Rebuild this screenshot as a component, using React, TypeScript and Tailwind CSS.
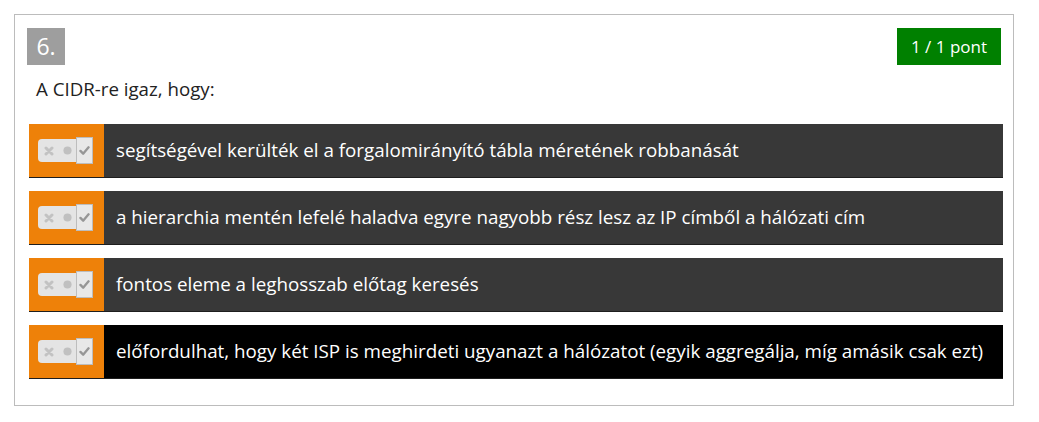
import React from "react";

const answers = [
  { text: "segítségével kerülték el a forgalomirányító tábla méretének robbanását", dark: false },
  { text: "a hierarchia mentén lefelé haladva egyre nagyobb rész lesz az IP címből a hálózati cím", dark: false },
  { text: "fontos eleme a leghosszab előtag keresés", dark: false },
  { text: "előfordulhat, hogy két ISP is meghirdeti ugyanazt a hálózatot (egyik aggregálja, míg amásik csak ezt)", dark: true },
];

function Toggle() {
  return (
    <div className="flex items-center">
      <div className="flex h-[23px] w-[38px] items-center justify-around rounded-l-[4px] bg-[#e4e4e4] pl-[1px]">
        <svg width="10" height="10" viewBox="0 0 10 10">
          <path d="M2 2 L8 8 M8 2 L2 8" stroke="#c2c2c2" strokeWidth="3" strokeLinecap="round" />
        </svg>
        <svg width="9" height="9" viewBox="0 0 10 10">
          <circle cx="5" cy="5" r="4.5" fill="#c0c0c0" />
        </svg>
      </div>
      <div className="flex h-[27px] w-[17px] items-center justify-center border border-[#bdbdbd] bg-[#e8e8e8]">
        <svg width="11" height="9" viewBox="0 0 12 10">
          <path d="M1.5 5.5 L4.5 8.5 L10.5 1.5" stroke="#969696" strokeWidth="2.6" fill="none" strokeLinecap="round" strokeLinejoin="round" />
        </svg>
      </div>
    </div>
  );
}

export default function App() {
  return (
    <div className="bg-white p-[14px]" style={{ fontFamily: '"Open Sans", "Noto Sans", sans-serif' }}>
      <div className="w-[1000px] border border-[#bcbcbc] px-[12px] pb-[26px] pt-[13px]">
        <div className="flex items-start justify-between">
          <div className="flex h-[37px] w-[38px] items-center justify-center bg-[#9e9e9e] text-[23px] text-white">6.</div>
          <div className="flex h-[37px] w-[104px] items-center justify-center bg-[#008000] text-[17px] text-white">1 / 1 pont</div>
        </div>
        <div className="mt-[12px] pl-[9px] text-[18.7px] leading-[24px] text-[#222]">A CIDR-re igaz, hogy:</div>
        <div className="mt-[23px] ml-[2px] mr-[-2px] flex flex-col gap-[13px]">
          {answers.map((a, i) => (
            <div
              key={i}
              className={`flex h-[54px] border-b border-[#1e1e1e] ${a.dark ? "bg-black" : "bg-[#383838]"}`}
            >
              <div className="flex w-[75px] shrink-0 items-center justify-start bg-[#ee8109] pl-[9px]">
                <Toggle />
              </div>
              <div className="flex items-center whitespace-nowrap pl-[12px] text-[18.8px] text-white">{a.text}</div>
            </div>
          ))}
        </div>
      </div>
    </div>
  );
}
